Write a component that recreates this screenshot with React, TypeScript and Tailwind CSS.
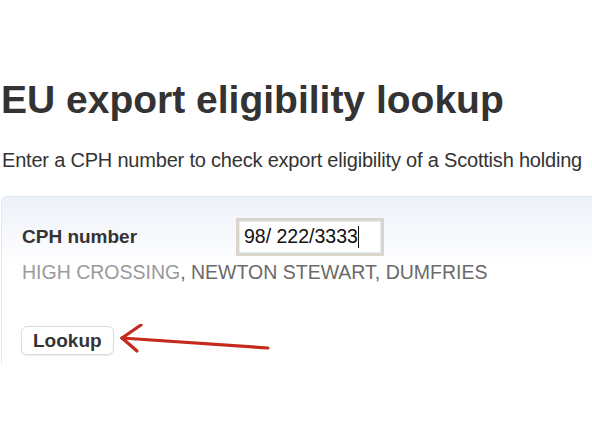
export default function App() {
  return (
    <div className="w-[592px] h-[444px] overflow-hidden bg-white text-[#333] font-['Liberation_Sans',Arial,sans-serif]">
      <h1 className="pt-[77px] pl-[1px] text-[39px] leading-[46px] font-bold whitespace-nowrap">
        EU export eligibility lookup
      </h1>
      <p className="mt-[25px] pl-[2px] text-[20px] leading-[24px] whitespace-nowrap tracking-[-0.2px]">
        Enter a CPH number to check export eligibility of a Scottish holding
      </p>
      <div className="mt-[24px] ml-[1px] w-[620px] h-[168px] rounded-tl-[6px] border border-b-0 border-[#e4e8ef] bg-gradient-to-b from-[#edf1f8] to-white to-[70px]">
        <div className="flex items-center pl-[20px] pt-[21px]">
          <span className="w-[214px] text-[19px] font-bold">CPH number</span>
          <div className="w-[148px] h-[38px] border-[3px] border-[#d9d4cc] bg-white flex items-center pl-[5px] shadow-[inset_0_0_0_1px_#e3edf7]">
            <span className="text-[19.5px] text-[#111]">98/ 222/3333</span>
            <span className="w-[1px] h-[22px] bg-[#111]"></span>
          </div>
        </div>
        <div className="pl-[20px] mt-[5px] text-[19.5px] leading-[22px] whitespace-nowrap">
          <span className="text-[#9a9a9a]">HIGH CROSSING</span>
          <span className="text-[#6a6a6a]">, NEWTON STEWART, DUMFRIES</span>
        </div>
        <div className="relative pl-[19px] mt-[43px]">
          <button className="h-[29px] px-[11px] rounded-[6px] border border-[#dcdcdc] bg-white text-[19px] font-bold leading-none text-[#333] shadow-[0_1px_1px_rgba(0,0,0,0.08)]">
            Lookup
          </button>
          <svg className="absolute left-[112px] top-[-2px]" width="160" height="40" viewBox="0 0 160 40">
            <g stroke="#c42b1c" strokeWidth="3.2" strokeLinecap="round" fill="none">
              <line x1="8" y1="14" x2="154" y2="24" />
              <line x1="8" y1="14" x2="27" y2="1" />
              <line x1="8" y1="14" x2="23" y2="27" />
            </g>
          </svg>
        </div>
      </div>
    </div>
  );
}
